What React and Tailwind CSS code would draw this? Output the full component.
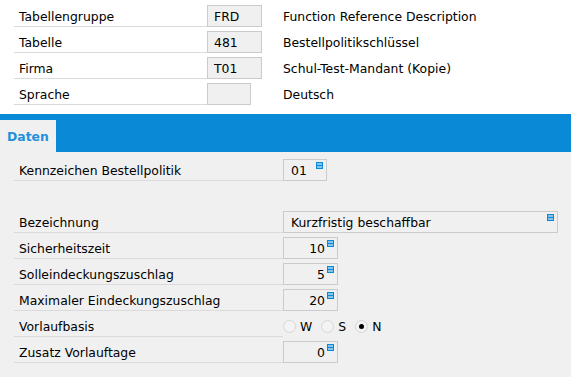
import React from "react";

const font = { fontFamily: "'DejaVu Sans', Verdana, sans-serif" };

const headRows = [
  { label: "Tabellengruppe", value: "FRD", desc: "Function Reference Description", w: "w-[55px]" },
  { label: "Tabelle", value: "481", desc: "Bestellpolitikschlüssel", w: "w-[55px]" },
  { label: "Firma", value: "T01", desc: "Schul-Test-Mandant (Kopie)", w: "w-[55px]" },
  { label: "Sprache", value: "", desc: "Deutsch", w: "w-[44px]" },
];

const ValueHelp = () => (
  <svg width="7" height="7" viewBox="0 0 7 7" className="absolute top-[2px] right-[3px]">
    <rect x="0" y="0" width="7" height="7" fill="#0a8ad6" />
    <rect x="1" y="1.5" width="5" height="1" fill="#ffffff" />
    <rect x="1" y="4.5" width="5" height="1" fill="#ffffff" />
  </svg>
);

const Field = ({ value, width, right }) => (
  <div
    className={`relative h-[22px] pt-[3px] border border-[#cbcbcb] bg-[#f0f0f0] flex items-center ${width} ${
      right ? "justify-end pr-[12px]" : "pl-[7px]"
    }`}
  >
    <span>{value}</span>
    <ValueHelp />
  </div>
);

const Label = ({ children }) => (
  <div className="w-[269px] h-[22px] pt-[3px] border-b border-[#dadada] flex items-center pl-[5px]">
    {children}
  </div>
);

const Radio = ({ label, checked }) => (
  <div className="flex items-center">
    <span className="w-[13px] h-[13px] rounded-full border border-[#d6d6d6] bg-[#f3f3f3] flex items-center justify-center">
      {checked && <span className="w-[5px] h-[5px] rounded-full bg-black" />}
    </span>
    <span className="ml-[4px]">{label}</span>
  </div>
);

export default function App() {
  return (
    <div className="w-[571px] h-[377px] overflow-hidden bg-[#f0f0f0] text-[12.4px] text-black" style={font}>
      <div className="bg-white h-[114px] pt-[5px] pl-[14px] flex flex-col gap-[4px]">
        {headRows.map((r) => (
          <div key={r.label} className="flex items-center h-[22px]">
            <div className="w-[193px] h-[22px] pt-[3px] border-b border-[#dadada] flex items-center pl-[5px]">
              {r.label}
            </div>
            <div className={`${r.w} h-[22px] pt-[3px] border border-[#cbcbcb] bg-[#f0f0f0] flex items-center pl-[6px]`}>
              {r.value}
            </div>
            <div className="ml-auto w-[288px] pt-[3px]">{r.desc}</div>
          </div>
        ))}
      </div>

      <div className="h-[38px] bg-[#0a8ad6] flex items-end">
        <div className="w-[56px] h-[32px] pt-[2px] bg-[#f0f0f0] flex items-center pl-[7px] font-bold text-[#2490da]">
          Daten
        </div>
      </div>

      <div className="pt-[7px] pl-[14px] flex flex-col gap-[4px]">
        <div className="flex h-[22px]">
          <Label>Kennzeichen Bestellpolitik</Label>
          <Field value="01" width="w-[44px]" />
        </div>
        <div className="h-[22px]" />
        <div className="flex h-[22px]">
          <Label>Bezeichnung</Label>
          <Field value="Kurzfristig beschaffbar" width="w-[275px]" />
        </div>
        <div className="flex h-[22px]">
          <Label>Sicherheitszeit</Label>
          <Field value="10" width="w-[55px]" right />
        </div>
        <div className="flex h-[22px]">
          <Label>Solleindeckungszuschlag</Label>
          <Field value="5" width="w-[55px]" right />
        </div>
        <div className="flex h-[22px]">
          <Label>Maximaler Eindeckungszuschlag</Label>
          <Field value="20" width="w-[55px]" right />
        </div>
        <div className="flex h-[22px]">
          <Label>Vorlaufbasis</Label>
          <div className="flex items-center gap-[9px] pt-[2px]">
            <Radio label="W" />
            <Radio label="S" />
            <Radio label="N" checked />
          </div>
        </div>
        <div className="flex h-[22px]">
          <Label>Zusatz Vorlauftage</Label>
          <Field value="0" width="w-[55px]" right />
        </div>
      </div>
    </div>
  );
}
